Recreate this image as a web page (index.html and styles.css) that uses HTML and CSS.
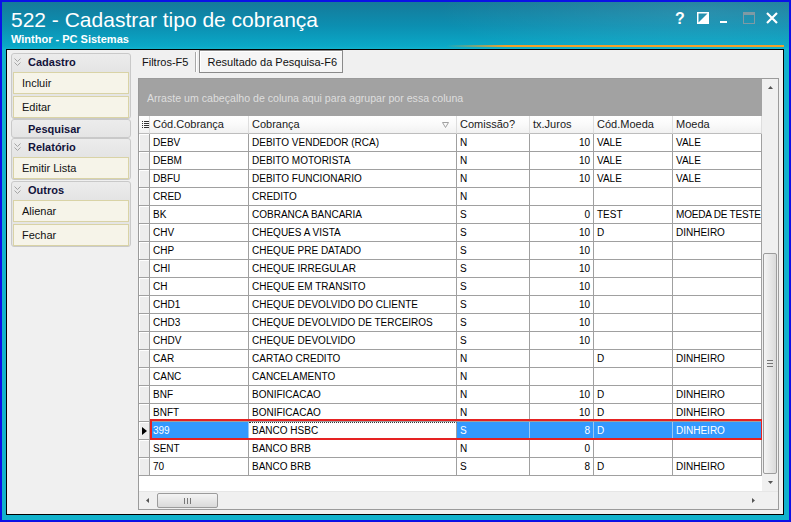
FILE: index.html
```html
<!DOCTYPE html>
<html>
<head>
    <title>522 - Cadastrar tipo de cobrança</title>
    <meta http-equiv="Content-Type" content="text/html;charset=utf-8"/>
    <link rel="stylesheet" href="styles.css">
</head>
<body>
<div class="window">
    <div class="titlebar">
        <div class="titles">
            <div class="title">522 - Cadastrar tipo de cobrança</div>
            <div class="subtitle">Winthor - PC Sistemas</div>
        </div>
        <div class="controls">
            <span class="ctl-help">?</span>
            <svg class="ctl-dock" width="12" height="12" viewBox="0 0 12 12">
                <rect x="0.75" y="0.75" width="10.5" height="10.5" fill="none" stroke="#fff" stroke-width="1.5"/>
                <polygon points="11,1 11,11 1,11" fill="#fff"/>
            </svg>
            <svg class="ctl-min" width="7" height="12" viewBox="0 0 7 12">
                <rect x="0" y="9" width="7" height="2" fill="#fff"/>
            </svg>
            <svg class="ctl-max" width="12" height="12" viewBox="0 0 12 12">
                <rect x="0.5" y="0.5" width="11" height="11" fill="none" stroke="#7f9aa4"/>
                <rect x="0" y="0" width="12" height="3" fill="#7f9aa4"/>
            </svg>
            <svg class="ctl-close" width="12" height="12" viewBox="0 0 12 12">
                <path d="M1 1L11 11M11 1L1 11" stroke="#fff" stroke-width="2.2"/>
            </svg>
        </div>
    </div>
    <div class="client">
        <div class="sidebar">
            <div class="group">
                <div class="group-head">
                    <svg class="chev" width="7" height="8" viewBox="0 0 7 8"><path d="M0.5 0.5l3 3 3-3M0.5 4.5l3 3 3-3" fill="none" stroke="#a4a4a4"/></svg>
                    Cadastro
                </div>
                <div class="btn">Incluir</div>
                <div class="btn">Editar</div>
            </div>
            <div class="group">
                <div class="group-head solo">Pesquisar</div>
            </div>
            <div class="group">
                <div class="group-head">
                    <svg class="chev" width="7" height="8" viewBox="0 0 7 8"><path d="M0.5 0.5l3 3 3-3M0.5 4.5l3 3 3-3" fill="none" stroke="#a4a4a4"/></svg>
                    Relatório
                </div>
                <div class="btn">Emitir Lista</div>
            </div>
            <div class="group spaced">
                <div class="group-head">
                    <svg class="chev" width="7" height="8" viewBox="0 0 7 8"><path d="M0.5 0.5l3 3 3-3M0.5 4.5l3 3 3-3" fill="none" stroke="#a4a4a4"/></svg>
                    Outros
                </div>
                <div class="btn">Alienar</div>
                <div class="btn">Fechar</div>
            </div>
        </div>
        <div class="main">
            <div class="tabs">
                <span class="tab">Filtros-F5</span>
                <span class="tab-sep"></span>
                <span class="tab active">Resultado da Pesquisa-F6</span>
            </div>
            <div class="grid">
                <div class="grid-top">
                    <div class="data">
                        <div class="group-panel">Arraste um cabeçalho de coluna aqui para agrupar por essa coluna</div>
                        <div class="row head">
                            <div class="cell ind">
                                <svg width="7" height="8" viewBox="0 0 7 8"><path d="M0 0.5h1M2 0.5h5M0 2.5h1M2 2.5h5M0 4.5h1M2 4.5h5M0 6.5h1M2 6.5h5" stroke="#333"/></svg>
                            </div>
                            <div class="cell">Cód.Cobrança</div>
                            <div class="cell filter">Cobrança
                                <svg width="7" height="6" viewBox="0 0 7 6"><path d="M0.5 0.5h6l-3 5z" fill="none" stroke="#a0a0a0"/></svg>
                            </div>
                            <div class="cell">Comissão?</div>
                            <div class="cell">tx.Juros</div>
                            <div class="cell">Cód.Moeda</div>
                            <div class="cell">Moeda</div>
                        </div>
                        <div class="row"><div class="cell ind"></div><div class="cell">DEBV</div><div class="cell">DEBITO VENDEDOR (RCA)</div><div class="cell">N</div><div class="cell num">10</div><div class="cell">VALE</div><div class="cell">VALE</div></div>
                        <div class="row"><div class="cell ind"></div><div class="cell">DEBM</div><div class="cell">DEBITO MOTORISTA</div><div class="cell">N</div><div class="cell num">10</div><div class="cell">VALE</div><div class="cell">VALE</div></div>
                        <div class="row"><div class="cell ind"></div><div class="cell">DBFU</div><div class="cell">DEBITO FUNCIONARIO</div><div class="cell">N</div><div class="cell num">10</div><div class="cell">VALE</div><div class="cell">VALE</div></div>
                        <div class="row"><div class="cell ind"></div><div class="cell">CRED</div><div class="cell">CREDITO</div><div class="cell">N</div><div class="cell num"></div><div class="cell"></div><div class="cell"></div></div>
                        <div class="row"><div class="cell ind"></div><div class="cell">BK</div><div class="cell">COBRANCA BANCARIA</div><div class="cell">S</div><div class="cell num">0</div><div class="cell">TEST</div><div class="cell clip">MOEDA DE TESTE</div></div>
                        <div class="row"><div class="cell ind"></div><div class="cell">CHV</div><div class="cell">CHEQUES A VISTA</div><div class="cell">S</div><div class="cell num">10</div><div class="cell">D</div><div class="cell">DINHEIRO</div></div>
                        <div class="row"><div class="cell ind"></div><div class="cell">CHP</div><div class="cell">CHEQUE PRE DATADO</div><div class="cell">S</div><div class="cell num">10</div><div class="cell"></div><div class="cell"></div></div>
                        <div class="row"><div class="cell ind"></div><div class="cell">CHI</div><div class="cell">CHEQUE IRREGULAR</div><div class="cell">S</div><div class="cell num">10</div><div class="cell"></div><div class="cell"></div></div>
                        <div class="row"><div class="cell ind"></div><div class="cell">CH</div><div class="cell">CHEQUE EM TRANSITO</div><div class="cell">S</div><div class="cell num">10</div><div class="cell"></div><div class="cell"></div></div>
                        <div class="row"><div class="cell ind"></div><div class="cell">CHD1</div><div class="cell">CHEQUE DEVOLVIDO DO CLIENTE</div><div class="cell">S</div><div class="cell num">10</div><div class="cell"></div><div class="cell"></div></div>
                        <div class="row"><div class="cell ind"></div><div class="cell">CHD3</div><div class="cell">CHEQUE DEVOLVIDO DE TERCEIROS</div><div class="cell">S</div><div class="cell num">10</div><div class="cell"></div><div class="cell"></div></div>
                        <div class="row"><div class="cell ind"></div><div class="cell">CHDV</div><div class="cell">CHEQUE DEVOLVIDO</div><div class="cell">S</div><div class="cell num">10</div><div class="cell"></div><div class="cell"></div></div>
                        <div class="row"><div class="cell ind"></div><div class="cell">CAR</div><div class="cell">CARTAO CREDITO</div><div class="cell">N</div><div class="cell num"></div><div class="cell">D</div><div class="cell">DINHEIRO</div></div>
                        <div class="row"><div class="cell ind"></div><div class="cell">CANC</div><div class="cell">CANCELAMENTO</div><div class="cell">N</div><div class="cell num"></div><div class="cell"></div><div class="cell"></div></div>
                        <div class="row"><div class="cell ind"></div><div class="cell">BNF</div><div class="cell">BONIFICACAO</div><div class="cell">N</div><div class="cell num">10</div><div class="cell">D</div><div class="cell">DINHEIRO</div></div>
                        <div class="row"><div class="cell ind"></div><div class="cell">BNFT</div><div class="cell">BONIFICACAO</div><div class="cell">N</div><div class="cell num">10</div><div class="cell">D</div><div class="cell">DINHEIRO</div></div>
                        <div class="row sel"><div class="cell ind">
                                <svg width="5" height="8" viewBox="0 0 5 8"><polygon points="0,0 5,4 0,8" fill="#000"/></svg>
                            </div><div class="cell">399</div><div class="cell focus">BANCO HSBC</div><div class="cell">S</div><div class="cell num">8</div><div class="cell">D</div><div class="cell">DINHEIRO</div></div>
                        <div class="row"><div class="cell ind"></div><div class="cell">SENT</div><div class="cell">BANCO BRB</div><div class="cell">N</div><div class="cell num">0</div><div class="cell"></div><div class="cell"></div></div>
                        <div class="row"><div class="cell ind"></div><div class="cell">70</div><div class="cell">BANCO BRB</div><div class="cell">S</div><div class="cell num">8</div><div class="cell">D</div><div class="cell">DINHEIRO</div></div>
                    </div>
                    <div class="vscroll">
                        <div class="arrow">
                            <svg width="5" height="3" viewBox="0 0 5 3"><polygon points="2.5,0 5,3 0,3" fill="#555"/></svg>
                        </div>
                        <div class="vtrack">
                            <div class="vthumb">
                                <svg width="6" height="7" viewBox="0 0 6 7"><path d="M0 0.5h6M0 3.5h6M0 6.5h6" stroke="#777"/></svg>
                            </div>
                        </div>
                        <div class="arrow">
                            <svg width="5" height="3" viewBox="0 0 5 3"><polygon points="0,0 5,0 2.5,3" fill="#555"/></svg>
                        </div>
                    </div>
                </div>
                <div class="hscroll">
                    <div class="arrow">
                        <svg width="3" height="5" viewBox="0 0 3 5"><polygon points="3,0 3,5 0,2.5" fill="#555"/></svg>
                    </div>
                    <div class="htrack">
                        <div class="hthumb">
                            <svg width="7" height="6" viewBox="0 0 7 6"><path d="M0.5 0v6M3.5 0v6M6.5 0v6" stroke="#777"/></svg>
                        </div>
                    </div>
                    <div class="arrow">
                        <svg width="3" height="5" viewBox="0 0 3 5"><polygon points="0,0 3,2.5 0,5" fill="#555"/></svg>
                    </div>
                    <div class="corner"></div>
                </div>
            </div>
        </div>
    </div>
</div>
</body>
</html>
```

FILE: styles.css
```css
body {
    margin: 0;
    font-family: "Liberation Sans", Arial, sans-serif;
    font-size: 11px;
    color: #000;
    background: #fff;
}

/* window frame */
.window {
    width: 791px;
    height: 522px;
    box-sizing: border-box;
    border: 2px solid #0b12e6;
    padding: 0 5px 5px 4px;
    display: flex;
    flex-direction: column;
    background:
        radial-gradient(ellipse 380px 70px at 700px 10px, rgba(255, 255, 255, 0.10), rgba(255, 255, 255, 0) 70%),
        linear-gradient(180deg, #157a9a 0, #0c8fb1 24px, #0aa8c7 44px, #12b2cc 47px);
}
.titlebar {
    flex: none;
    height: 47px;
    display: flex;
    justify-content: space-between;
    background: linear-gradient(90deg, rgba(242, 160, 40, 0) 440px, #f2a02a 500px) left bottom 2px / 100% 2px no-repeat;
}
.titles {
    padding: 6px 0 0 5px;
    color: #fff;
}
.title {
    font-size: 21px;
    line-height: 24px;
}
.subtitle {
    font-size: 11px;
    font-weight: bold;
    line-height: 14px;
}
.controls {
    display: flex;
    align-items: flex-start;
    padding: 10px 6px 0 0;
}
.ctl-help {
    color: #fff;
    font-weight: bold;
    font-size: 16px;
    line-height: 13px;
    width: 9px;
}
.ctl-dock {
    margin-left: 13px;
}
.ctl-min {
    margin-left: 11px;
}
.ctl-max {
    margin-left: 16px;
}
.ctl-close {
    margin-left: 11px;
}

/* client area */
.client {
    flex: 1;
    min-height: 0;
    display: flex;
    border: 1px solid #000;
    background: #f0f0f0;
}
.sidebar {
    width: 131px;
    flex: none;
    box-sizing: border-box;
    padding: 3px 0 0 4px;
}
.group {
    width: 120px;
    box-sizing: border-box;
    border: 1px solid #c9c9c9;
    border-radius: 3px;
    padding: 0 1px;
    background: linear-gradient(180deg, #ececec 0, #e4e4e4 18px, #e6e6e6 100%);
}
.group.spaced {
    margin-top: 1px;
}
.group-head {
    height: 18px;
    box-sizing: border-box;
    display: flex;
    align-items: center;
    padding: 0 0 3px 1px;
    font-weight: bold;
    color: #12123a;
}
.group-head.solo {
    height: 17px;
    padding: 0 0 0 15px;
}
.chev {
    margin-right: 7px;
}
.btn {
    height: 22px;
    box-sizing: border-box;
    border: 1px solid #d9d3a6;
    background: #f6f4e9;
    display: flex;
    align-items: center;
    padding-left: 8px;
    margin-bottom: 2px;
    color: #111;
}
.group .btn:last-child {
    margin-bottom: 0;
}

.main {
    flex: 1;
    display: flex;
    flex-direction: column;
    padding: 0 4px 4px 0;
}
.tabs {
    height: 23px;
    display: flex;
    margin-bottom: 5px;
}
.tab {
    display: flex;
    align-items: center;
    padding: 1px 6px 0 4px;
    color: #111;
    white-space: nowrap;
}
.tab-sep {
    width: 1px;
    background: #a8a8a8;
    border-right: 1px solid #fff;
    margin: 2px 2px 1px 1px;
}
.tab.active {
    width: 144px;
    box-sizing: border-box;
    padding-left: 7px;
    padding-right: 0;
    border: 1px solid #8a8a8a;
    box-shadow: inset 1px 1px 0 #fff;
    background: #f5f5f5;
}

/* grid */
.grid {
    height: 432px;
    box-sizing: border-box;
    border: 1px solid #9b9b9b;
    background: #fff;
    display: flex;
    flex-direction: column;
}
.grid-top {
    flex: 1;
    min-height: 0;
    display: flex;
}
.data {
    width: 623px;
    overflow: hidden;
}
.group-panel {
    height: 37px;
    display: flex;
    align-items: center;
    padding-left: 8px;
    font-size: 10.6px;
    background: #a2a2a2;
    color: #dedede;
}
.row {
    display: grid;
    grid-template-columns: 11px 99px 208px 73px 64px 79px 89px;
    height: 18px;
    position: relative;
}
.cell {
    box-sizing: border-box;
    border-right: 1px solid #a0a0a0;
    border-bottom: 1px solid #a0a0a0;
    padding-left: 3px;
    line-height: 17px;
    font-size: 10px;
    white-space: nowrap;
    overflow: hidden;
}
.cell.clip {
    letter-spacing: -0.2px;
}
.cell.num {
    text-align: right;
    padding: 0 3px 0 0;
}
.cell.ind {
    padding: 0;
    background: #ededed;
    box-shadow: inset 1px 1px 0 #fff;
    display: flex;
    align-items: center;
    justify-content: center;
}
.head .cell {
    font-size: 11px;
    color: #1a1a1a;
    background: linear-gradient(180deg, #fff 0, #fafafa 50%, #f1f1f1 100%);
    border-right-color: #dedede;
    border-bottom-color: #bdbdbd;
}
.head .cell.ind {
    justify-content: flex-start;
    padding-left: 3px;
    box-shadow: none;
}
.head .cell.filter {
    display: flex;
    align-items: center;
    justify-content: space-between;
    padding-right: 7px;
}

.row.sel .cell {
    background: #3399ff;
    color: #fff;
    border-right-color: #9cc9f5;
}
.row.sel .cell.ind {
    background: #ededed;
    border-right-color: #a0a0a0;
}
.row.sel .cell.focus {
    background: #fff;
    color: #000;
    border-right-color: #a0a0a0;
    border-top: 1px dotted #333;
    line-height: 15px;
}
.row.sel::after {
    content: "";
    position: absolute;
    top: -3px;
    bottom: 0;
    left: 11px;
    right: -1px;
    border: 2px solid #e52222;
    pointer-events: none;
}

/* scrollbars */
.vscroll {
    width: 16px;
    box-sizing: border-box;
    background: #f0f0f0;
    display: flex;
    flex-direction: column;
}
.vscroll .arrow {
    height: 17px;
    display: flex;
    align-items: center;
    justify-content: center;
}
.vtrack {
    flex: 1;
}
.vthumb {
    margin: 157px 0 0 1px;
    width: 14px;
    height: 221px;
    box-sizing: border-box;
    border: 1px solid #9c9c9c;
    border-radius: 2px;
    background: linear-gradient(90deg, #f4f4f4, #dadada);
    display: flex;
    align-items: center;
    justify-content: center;
}
.hscroll {
    height: 18px;
    box-sizing: border-box;
    border-top: 1px solid #e6e6e6;
    background: #f0f0f0;
    display: flex;
}
.hscroll .arrow {
    width: 17px;
    display: flex;
    align-items: center;
    justify-content: center;
}
.htrack {
    flex: 1;
}
.hthumb {
    margin: 1px 0 0 1px;
    width: 61px;
    height: 15px;
    box-sizing: border-box;
    border: 1px solid #9c9c9c;
    border-radius: 2px;
    background: linear-gradient(180deg, #f4f4f4, #dadada);
    display: flex;
    align-items: center;
    justify-content: center;
}
.corner {
    width: 16px;
    background: #f0f0f0;
}
```
